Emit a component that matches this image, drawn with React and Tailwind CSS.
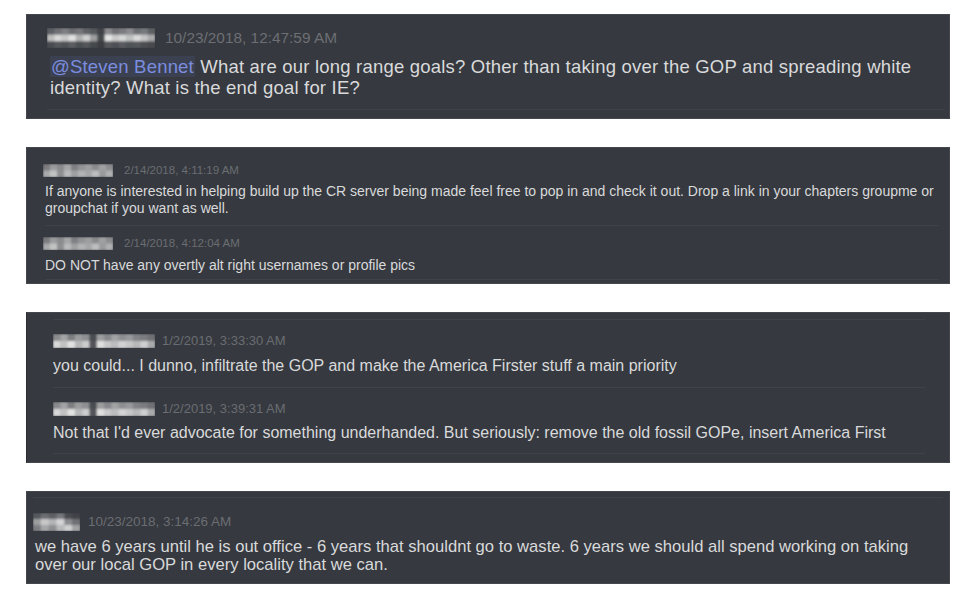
import React from "react";

const Pix = ({ w, h, rows, className = "" }) => {
  const rh = h / rows.length;
  return (
    <svg width={w} height={h} className={"shrink-0 " + className} viewBox={`0 0 ${w} ${h}`}>
      <defs>
        <filter id="sb" x="-5%" y="-10%" width="110%" height="120%">
          <feGaussianBlur stdDeviation="0.8" />
        </filter>
      </defs>
      <g filter="url(#sb)">
        {rows.map((row, r) => {
          const cw = w / row.length;
          return row.map((c, i) => (
            <rect key={r + "-" + i} x={i * cw} y={r * rh} width={cw + 0.5} height={rh + 0.5} fill={c} />
          ));
        })}
      </g>
    </svg>
  );
};

const blur1 = [
  ["#5b5e63", "#6e7075", "#7d7f83", "#6a6c70", "#74767a", "#606266", "#55585c", "#3f4247", "#8a8b8e", "#6f7175", "#7a7c80", "#8c8d90", "#6d6f73", "#77797c", "#5d6064"],
  ["#bdbdbe", "#d9d9d9", "#c9c9ca", "#e0e0e0", "#b0b1b2", "#cfcfcf", "#9c9d9f", "#45484c", "#e4e4e4", "#cacaca", "#d6d6d6", "#bfc0c1", "#dadada", "#c4c4c5", "#a8a9aa"],
  ["#4a4d51", "#55575b", "#4e5155", "#5a5c60", "#4c4f53", "#525458", "#45484c", "#3b3e43", "#56585c", "#4d5054", "#585a5e", "#4f5256", "#53565a", "#4b4e52", "#46494d"],
];
const blur2 = [
  ["#7b7c7f", "#9a9b9d", "#8a8b8e", "#a5a6a8", "#7f8083", "#929395", "#9d9ea0", "#888a8c", "#a0a1a3", "#8c8d90"],
  ["#a9aaab", "#c3c3c4", "#8e8f92", "#b9babb", "#9fa0a2", "#b3b4b5", "#a6a7a9", "#bebebf", "#9a9b9d", "#b0b1b2"],
];
const blur3 = [
  ["#8a8b8e", "#a3a4a6", "#7c7e81", "#9a9b9d", "#8f9093", "#4a4d51", "#9c9d9f", "#86888b", "#a1a2a4", "#8d8e91", "#97989b", "#818386", "#7a7c7f", "#6f7175"],
  ["#d8d8d9", "#c2c2c3", "#e2e2e2", "#b6b7b8", "#cdcdce", "#52555a", "#dfdfdf", "#c9c9ca", "#bcbdbe", "#d3d3d4", "#c6c6c7", "#b8b9ba", "#cfcfd0", "#a9aaab"],
];
const blur4 = [
  ["#55585c", "#6b6d71", "#5e6165", "#75777b", "#484b4f", "#3f4247"],
  ["#9d9ea0", "#c8c8c9", "#b3b4b5", "#d4d4d5", "#8a8b8e", "#6e7074"],
  ["#7d7f82", "#a6a7a9", "#8f9093", "#b8b9ba", "#cfd0d1", "#a2a3a5"],
];

const Divider = ({ className = "" }) => <div className={"h-px bg-[#3f4248] " + className} />;

export default function App() {
  return (
    <div className="w-[980px] h-[606px] bg-white pl-[26px] pt-[14px] flex flex-col gap-[28px] font-['Liberation_Sans',Arial,sans-serif] overflow-hidden">
      {/* Panel 1 */}
      <div className="w-[924px] h-[105px] shrink-0 bg-[#36393f] border border-[#44474c] pt-[13px] flex flex-col">
        <div className="flex items-center h-[20px] pl-[20px]">
          <Pix w={108} h={20} rows={blur1} />
          <span className="ml-[10px] text-[15.4px] leading-[20px] text-[#6c6f74]">10/23/2018, 12:47:59 AM</span>
        </div>
        <div className="mt-[8px] pl-[23px] text-[18.5px] tracking-[0.2px] leading-[21px] text-[#d9dadb] whitespace-nowrap">
          <span className="text-[#7a8ddf] bg-[#3c4152] px-px">@Steven Bennet</span> What are our long range goals? Other than taking over the GOP and spreading white
          <br />
          identity? What is the end goal for IE?
        </div>
        <Divider className="mt-[11px] ml-[20px] mr-[4px] bg-[#3c3f44]" />
      </div>

      {/* Panel 2 */}
      <div className="w-[924px] h-[137px] shrink-0 bg-[#36393f] border border-[#44474c] pt-[16px] flex flex-col">
        <div className="flex items-center h-[13px] pl-[16px]">
          <Pix w={70} h={13} rows={blur2} />
          <span className="ml-[11px] text-[11.5px] leading-[13px] text-[#6a6d72]">2/14/2018, 4:11:19 AM</span>
        </div>
        <div className="mt-[6px] pl-[18px] text-[14px] leading-[17px] text-[#d9dadb] whitespace-nowrap">
          If anyone is interested in helping build up the CR server being made feel free to pop in and check it out. Drop a link in your chapters groupme or
          <br />
          groupchat if you want as well.
        </div>
        <Divider className="mt-[8px] ml-[18px] mr-[10px] bg-[#3c3f44]" />
        <div className="flex items-center h-[13px] pl-[16px] mt-[11px]">
          <Pix w={70} h={13} rows={blur2} />
          <span className="ml-[11px] text-[11.5px] leading-[13px] text-[#6a6d72]">2/14/2018, 4:12:04 AM</span>
        </div>
        <div className="mt-[7px] pl-[18px] text-[14px] leading-[17px] text-[#d9dadb] whitespace-nowrap">
          DO NOT have any overtly alt right usernames or profile pics
        </div>
        <Divider className="mt-[5px] ml-[18px] mr-[10px] bg-[#3b3e43]" />
      </div>

      {/* Panel 3 */}
      <div className="w-[924px] h-[151px] shrink-0 bg-[#36393f] border border-[#44474c] border-l-[#2a2c30] pt-[6px] flex flex-col">
        <Divider className="ml-[26px] mr-[24px]" />
        <div className="flex items-center h-[14px] pl-[26px] mt-[14px]">
          <Pix w={102} h={14} rows={blur3} />
          <span className="ml-[7px] text-[13px] leading-[14px] text-[#6a6d72]">1/2/2019, 3:33:30 AM</span>
        </div>
        <div className="mt-[8px] pl-[26px] text-[16px] leading-[20px] text-[#d9dadb] whitespace-nowrap">
          you could... I dunno, infiltrate the GOP and make the America Firster stuff a main priority
        </div>
        <Divider className="mt-[11px] ml-[26px] mr-[24px]" />
        <div className="flex items-center h-[14px] pl-[26px] mt-[14px]">
          <Pix w={102} h={14} rows={blur3} />
          <span className="ml-[7px] text-[13px] leading-[14px] text-[#6a6d72]">1/2/2019, 3:39:31 AM</span>
        </div>
        <div className="mt-[7px] pl-[26px] text-[16px] leading-[20px] text-[#d9dadb] whitespace-nowrap">
          Not that I'd ever advocate for something underhanded. But seriously: remove the old fossil GOPe, insert America First
        </div>
        <Divider className="mt-[10px] ml-[26px] mr-[24px]" />
      </div>

      {/* Panel 4 */}
      <div className="w-[924px] h-[93px] shrink-0 bg-[#36393f] border border-[#44474c] pt-[5px] flex flex-col">
        <Divider className="ml-[6px] mr-[6px] bg-[#3b3e43]" />
        <div className="flex items-center h-[18px] pl-[6px] mt-[15px]">
          <Pix w={47} h={18} rows={blur4} />
          <span className="ml-[8px] text-[13.5px] leading-[18px] text-[#6a6d72]">10/23/2018, 3:14:26 AM</span>
        </div>
        <div className="mt-[7px] pl-[8px] text-[16.6px] leading-[18px] text-[#d9dadb] whitespace-nowrap">
          we have 6 years until he is out office - 6 years that shouldnt go to waste. 6 years we should all spend working on taking
          <br />
          over our local GOP in every locality that we can.
        </div>
      </div>
    </div>
  );
}
